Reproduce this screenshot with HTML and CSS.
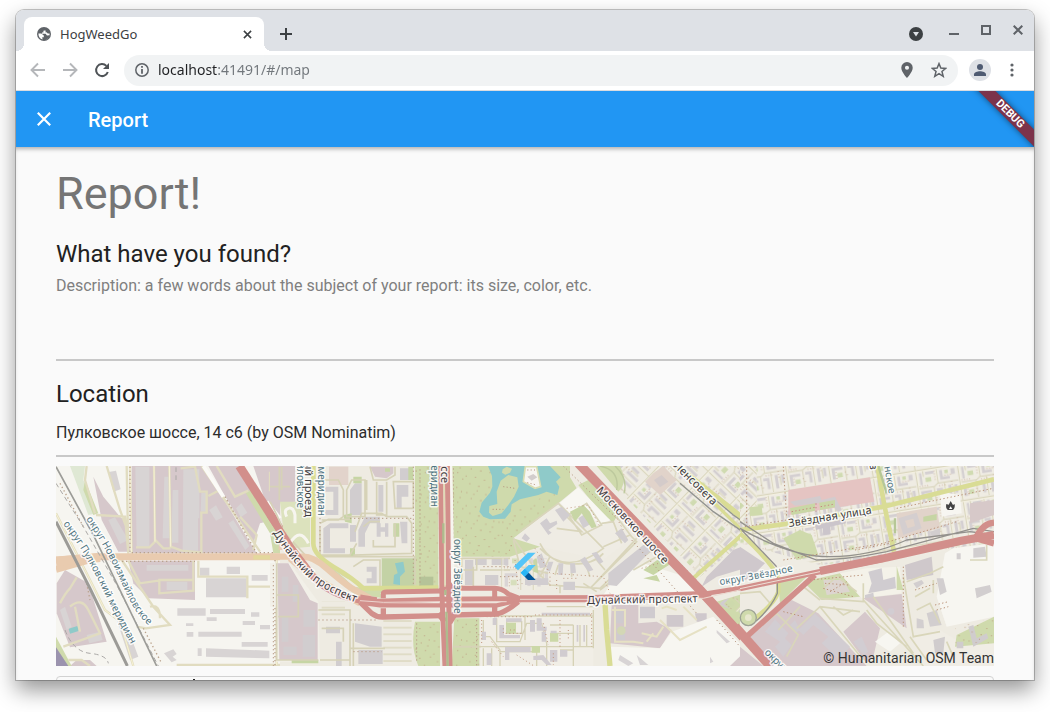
FILE: index.html
```html
<!DOCTYPE html>
<html lang="en">
<head>
<meta charset="utf-8">
<meta name="viewport" content="width=device-width, initial-scale=1">
<title>HogWeedGo</title>
<link rel="stylesheet" href="styles.css">
</head>
<body>
<div class="window">
  <header class="tabstrip">
    <div class="tab">
      <svg class="favicon" viewBox="0 0 14 14" aria-hidden="true"><circle cx="7" cy="7" r="7" fill="#5f6368"/><path d="M1.400 6.600H4.400L6.800 8.400V10.200H5.200L5.600 12.500C3 12 1.400 9.800 1.400 6.600ZM8.600 1.600V3.200L6.400 3.800V5.600H5V6.800H8.600L10 8.600 12.400 8.200C12 10.600 10.500 12.200 8.400 12.600 11.600 12 12.700 9.300 12.600 6.600H10.800L9.600 5.200 8.600 5.400" fill="#fff"/></svg>
      <span class="tab-title">HogWeedGo</span>
      <button class="icon-button tab-close" aria-label="Close tab"><svg viewBox="0 0 10 10"><path d="M1 1 9 9M9 1 1 9" fill="none" stroke="#3c4043" stroke-width="1.700"/></svg></button>
    </div>
    <button class="icon-button new-tab" aria-label="New tab"><svg viewBox="0 0 12 12"><path d="M6 0V12M0 6H12" stroke="#3c4043" stroke-width="2"/></svg></button>
    <div class="window-controls">
      <button class="icon-button search-tabs" aria-label="Search tabs"><svg viewBox="0 0 14 14"><circle cx="7" cy="7" r="7" fill="#3c4043"/><path d="M4 5H10L7 9.500Z" fill="#dee1e6"/></svg></button>
      <button class="icon-button" aria-label="Minimize"><svg viewBox="0 0 10 10"><path d="M0 9H10" stroke="#5f6368" stroke-width="2"/></svg></button>
      <button class="icon-button" aria-label="Maximize"><svg viewBox="0 0 10 10"><path d="M1 1H9V9H1Z" fill="none" stroke="#5f6368" stroke-width="2"/></svg></button>
      <button class="icon-button" aria-label="Close window"><svg viewBox="0 0 10 10"><path d="M.7.7 9.300 9.300M9.300.7.7 9.300" stroke="#5f6368" stroke-width="2"/></svg></button>
    </div>
  </header>
  <nav class="toolbar" aria-label="Browser toolbar">
    <button class="icon-button nav-button" aria-label="Back" disabled><svg viewBox="0 0 16 16"><path d="M15 8H2M8 1.500 1.500 8 8 14.500" fill="none" stroke="#b5b7ba" stroke-width="1.900"/></svg></button>
    <button class="icon-button nav-button" aria-label="Forward" disabled><svg viewBox="0 0 16 16"><path d="M1 8H14M8 1.500 14.500 8 8 14.500" fill="none" stroke="#b5b7ba" stroke-width="1.900"/></svg></button>
    <button class="icon-button nav-button" aria-label="Reload"><svg viewBox="0 0 16 16"><path d="M13.800 10A6 6 0 1 1 12.400 3.900" fill="none" stroke="#4f5357" stroke-width="2"/><path d="M15 1V7H9Z" fill="#4f5357"/></svg></button>
    <div class="omnibox">
      <svg class="omni-icon" viewBox="0 0 14 14" aria-hidden="true"><circle cx="7" cy="7" r="6.200" fill="none" stroke="#5f6368" stroke-width="1.500"/><path d="M7 6V10.800M7 3V4.800" stroke="#5f6368" stroke-width="1.800"/></svg>
      <input class="url" type="text" aria-label="Address" value="localhost:41491/#/map">
      <button class="icon-button" aria-label="Location access"><svg viewBox="0 0 14 14"><path fill-rule="evenodd" d="M7 0A5 5 0 0 0 2 5C2 8.700 7 14 7 14S12 8.700 12 5A5 5 0 0 0 7 0ZM7 3.200A1.800 1.800 0 1 1 7 6.800 1.800 1.800 0 0 1 7 3.200Z" fill="#5f6368"/></svg></button>
      <button class="icon-button" aria-label="Bookmark"><svg viewBox="0 0 14 14"><path d="M7 1.400 8.600 5.300 12.900 5.600 9.600 8.300 10.700 12.500 7 10.200 3.300 12.500 4.400 8.300 1.100 5.600 5.400 5.300Z" fill="none" stroke="#5f6368" stroke-width="1.300"/></svg></button>
    </div>
    <button class="icon-button avatar" aria-label="Profile"><svg viewBox="0 0 22 22"><circle cx="11" cy="11" r="11" fill="#dee1e6"/><circle cx="11" cy="8" r="3" fill="#4f5b72"/><path d="M5 17V15.500C5 13.300 8.500 12.200 11 12.200S17 13.300 17 15.500V17Z" fill="#4f5b72"/></svg></button>
    <button class="icon-button menu" aria-label="Menu"><svg viewBox="0 0 4 14"><circle cx="2" cy="2" r="1.600" fill="#5f6368"/><circle cx="2" cy="7" r="1.600" fill="#5f6368"/><circle cx="2" cy="12" r="1.600" fill="#5f6368"/></svg></button>
  </nav>
  <div class="viewport">
    <div class="appbar">
      <button class="icon-button back" aria-label="Close"><svg viewBox="0 0 14 14"><path d="M.8.800 13.200 13.200M13.200.800.800 13.200" stroke="#fff" stroke-width="2.200"/></svg></button>
      <span class="appbar-title">Report</span>
      <span class="debug">DEBUG</span>
    </div>
    <main class="content">
      <h1>Report!</h1>
      <h2><label for="description">What have you found?</label></h2>
      <textarea id="description" class="description" placeholder="Description: a few words about the subject of your report: its size, color, etc."></textarea>
      <h2 class="location-title"><label for="location">Location</label></h2>
      <input id="location" class="location" type="text" value="Пулковское шоссе, 14 с6 (by OSM Nominatim)">
      <div class="map">
        <svg class="map-canvas" viewBox="0 0 938 200" preserveAspectRatio="xMidYMid slice" role="img" aria-label="Map">
          <defs>
            <pattern id="trees" width="97" height="89" patternUnits="userSpaceOnUse"><path d="M7 9h3M38 4h3M64 15h3M88 6h3M20 27h3M49 33h3M77 38h3M5 48h3M33 52h3M92 57h3M60 61h3M16 71h3M43 79h3M74 82h3M84 24h3M28 14h3" stroke="#bd9c80" stroke-width="3"/></pattern>
            <g id="estate"><path d="M0 5H150M5 0V130M78 5V60H150M5 70H62V130M100 60V130M62 70 78 60M30 5V30M130 78V110" fill="none" stroke="#d8d4ba" stroke-width="4"/><path d="M0 9H150M9 9V130M74 9V56M104 64V130" fill="none" stroke="#f3f0e0" stroke-width="3"/><path d="M16 16H24V58H16ZM38 14H68V24H38ZM88 16H98V50H88ZM98 40H122V50H98ZM128 16H142V36H128ZM14 80H24V120H14ZM24 80H52V90H24ZM70 78H92V88H70ZM82 88H92V118H82ZM112 72H122V120H112ZM134 74H144V104H134Z" fill="#d1cccf"/><path d="M36 34H56V50H36ZM106 18H118V30H106ZM32 100H50V116H32Z" fill="#cdd9ac"/><path d="M12 63h3m6 0h3m6 0h3m6 0h3M70 14v3m0 7v3m0 7v3m0 7v3M80 70h3m7 0h3m7 0h3M28 96v3m0 7v3m0 7v3M126 60v3m0 7v3m0 7v3M104 36h3m7 0h3m7 0h3M60 98v3m6 8v3" stroke="#bd9883" stroke-width="3"/></g>
            <pattern id="blocks" width="150" height="130" patternUnits="userSpaceOnUse"><use href="#estate"/></pattern>
            <pattern id="blocks-diagonal" width="150" height="130" patternUnits="userSpaceOnUse" patternTransform="rotate(-46) scale(.9)"><use href="#estate"/></pattern>
            <pattern id="blocks-tilted" width="150" height="130" patternUnits="userSpaceOnUse" patternTransform="rotate(-9) scale(.85)"><use href="#estate"/></pattern>
            <pattern id="lots" width="26" height="20" patternUnits="userSpaceOnUse"><path d="M0 3H26" stroke="#dad6bb" stroke-width="4"/></pattern>
            <path id="l1" d="M30 53Q52 85 66 118T94 160"/>
            <path id="l2" d="M7 58Q28 84 47 124T81 188"/>
            <path id="l3" d="M217 67Q230 88 248 107T308 139"/>
            <path id="l4" d="M531 138L655 136"/>
            <path id="l5" d="M540 25L616 107"/>
            <path id="l6" d="M611-6L675 58"/>
            <path id="l7" d="M733 61L826 46"/>
            <path id="l8" d="M664 119Q700 114 748 103"/>
          </defs>
          <rect width="938" height="200" fill="#eeebe2"/>
          <g transform="scale(.33333)">
            <!-- west: industrial blocks and railways -->
            <g transform="translate(-48 -18)">
              <path d="M48 18H720V618H48Z" fill="#f6f5f0"/>
              <path d="M90 18H135L130 60 170 160 145 165Z" fill="#dfe8d4"/><path d="M135 60 175 160 160 165 130 90Z" fill="#cfdaac"/>
              <path d="M160 50 190 110 240 170 265 190 270 275H235L185 180Z" fill="#d6c8cb"/>
              <path d="M275 18H490L650 280H275Z" fill="#d6c8cb"/><path d="M505 18H600L700 180 660 190 640 250 550 100Z" fill="#d6c8cb"/>
              <path d="M640 18H720V190L685 150Z" fill="#d6c8cb"/><path d="M265 302H465V420L325 415 280 370Z" fill="#d6c8cb"/>
              <path d="M75 330 145 370 200 545 90 562 50 460V370Z" fill="#d6c8cb"/><path d="M110 600H150L170 618H90Z" fill="#d6c8cb"/>
              <path d="M615 95 635 90 720 220V280H700L690 220Z" fill="#cfdaac"/><path d="M48 530 95 618H80L48 565Z" fill="#cfdaac"/>
              <path d="M48 562 85 618H48Z" fill="#9b93ae"/><path d="M86 506 112 498 116 513 90 521Z" fill="#8fcac9"/>
              <g fill="#d8d4d4"><path d="M286 20H328V262H290ZM373 50H390V235H368ZM398 90H415V248H394ZM430 28H478V175H474V272H428ZM484 98H500V155H482ZM206 36 228 32 242 88 220 95ZM205 180 225 172 265 240 240 252ZM508 150 528 136 548 172 528 182ZM588 145 604 130 622 158 602 172ZM565 190 580 180 628 258 616 270ZM320 315H445V332H320ZM380 365H442V390H380ZM498 355H620V412H498ZM412 445H497V467H412ZM510 447H615V462H510ZM475 515H605V530H475ZM605 546H683V560H605ZM498 565 688 572V595L498 590ZM473 565H485V588H473ZM440 516H460V530H440ZM633 457H658V470H633ZM608 483H645V495H608ZM660 495H690V508H660ZM480 323H508V347H480ZM372 580 400 568 410 582 398 590 410 600 395 607ZM225 465 245 455 295 590 270 600ZM60 450 75 440 95 500 80 510ZM140 525 180 515 188 540 148 550ZM635 345H683V362H635ZM560 320H600V342H560ZM438 490H460V498H438ZM500 472H530V483H500Z"/></g>
              <g fill="none" stroke="#e1dcc0" stroke-width="7"><path d="M270 18 275 285M342 18 345 245M388 18 392 260 425 272 488 278M422 25 465 20 480 95H500V158H484V275M288 262H328L348 242 370 265H392M168 165 255 170 265 280M140 18 135 60 165 160M505 108 535 92M530 18 585 110 625 92M485 18 660 275M475 302V350H622V415M460 302V392L358 400V360H460M265 302 300 370 355 362M625 380H700M710 300V615M48 160 140 340 195 450 240 485 280 618M235 285 340 440 390 495 318 505 290 500M330 440Q360 430 360 475M60 430Q75 400 90 385L110 352M90 440Q125 410 145 450L180 520 70 560M105 440 120 515M260 18 265 285M200 18 240 150 262 210M410 615H720M85 600 125 600 150 618M690 35V90H720M600 170 650 225 640 270"/></g>
              <g stroke="#f7f2d4" fill="none" stroke-width="3"><path d="M342 18 345 245M388 18 392 260M270 18 275 285M710 300V615M48 160 140 340 195 450 240 485 280 618"/></g>
              <path d="M490 18 550 110M680 125 720 175" stroke="#fbfaf7" stroke-width="11"/>
              <path d="M48 300 180 290 720 290M48 328 140 302" fill="none" stroke="#e9cbaf" stroke-width="21"/>
              <path d="M48 304 180 292" stroke="#e9cbaf" stroke-width="28"/><path d="M640 292H720" stroke="#e3d89d" stroke-width="13"/>
              <path d="M210 304H465M275 278H700M705 300V618M270 20V275M555 110 650 280M310 505 365 610M60 70 130 200M140 370 150 420" fill="none" stroke="#baa28c" stroke-width="4" stroke-dasharray="4 8"/>
              <path d="M48 70 130 200 230 375 355 618M75 510Q100 575 150 580T205 610M408 22V60" fill="none" stroke="#aaa8a6" stroke-width="3" stroke-dasharray="14 10"/>
              <path d="M48 20 160 225 350 618" fill="none" stroke="#9c9c98" stroke-width="5"/><path d="M48 185 150 385 262 618" fill="none" stroke="#9c9b97" stroke-width="9"/>
              <path d="M598 18 720 208" stroke="#d28f8b" stroke-width="26"/>
            </g>
            <!-- centre: housing and parks -->
            <g transform="translate(642 -18)">
              <path d="M135 18H435V385H280L140 280Z" fill="#eeebe2"/><path d="M0 18H75V125L30 130 0 110Z" fill="#d6c8cb"/>
              <path d="M30 125H120V260L70 265 40 210Z" fill="#dce2bd"/><path d="M145 295Q200 330 250 380L340 390V415L250 400Z" fill="#cfdaac"/>
              <path d="M0 310H60L145 425 150 605H20V440H0Z" fill="#f2f0e8"/><path d="M22 310H55L120 420 143 430V600H28Z" fill="#d6c8cb"/>
              <path d="M435 18H505V385H435ZM435 485H510V618H445Q420 560 435 485ZM553 475H628V618H545Z" fill="#cfdaac"/>
              <path d="M545 18H900V230L720 290H545Z" fill="#cfdaac"/><path d="M435 18H505V385H435ZM435 490H510V618H435ZM545 18H735V290H545ZM555 480H628V618H555Z" fill="url(#trees)"/>
              <path d="M335 295H435V380H335Z" fill="#c3d2a5"/><path d="M375 310 400 305 405 335 390 350V375L370 372 372 345 383 340Z" fill="#8fcac9"/>
              <path d="M177 20H235V75H177Z" fill="#e2d3cb"/><path d="M300 20H370V40L350 55 315 50Z" fill="#d6c8cb"/>
              <path d="M165 80H205V165H165V150H190V95H165ZM240 90 255 70H275V165H240ZM160 205 180 190H235V205H180V265H225V280H160ZM265 210 285 170H330V190H300L285 220V260H265ZM240 195H258V245H240ZM320 190H332V202H345V190H355V230H345V215H332V230H320ZM390 185H412V250H395ZM380 75H415V110H395V145H380ZM390 25H420V60H390ZM290 320H320V370H290V355H305V335H290ZM325 75H340V155H325ZM35 350H55V395H35ZM68 375H85V425H68ZM35 470H55V545H35ZM100 450H135V500H100ZM40 560H80V585H40ZM98 525H135V590H98ZM255 490 335 500V560H300L255 545ZM265 570H338V612H265ZM585 300H610V375H585ZM615 295H650V315H615ZM665 295H715V315H665ZM645 345H685V375H645ZM198 545H215V618H198ZM168 500H210V520H168Z" fill="#d1cdcf"/>
              <path d="M220 165 245 160V190L225 185ZM250 50H275V70H250ZM345 25H360V35H345ZM370 190H388V230H370ZM65 600H145V610H65ZM415 20H430V60H415ZM240 265H255V290H240Z" fill="#c6d5a4"/>
              <path d="M448 350H490V378H448Z" fill="#b5c398"/>
              <g fill="none" stroke="#d6d2b7" stroke-width="5"><path d="M155 60H205L220 90V170L205 180H155M230 90 245 60H285V170H230ZM150 190 175 178H240M150 200V285H240L260 250M255 215 275 160H335L350 170H410L425 190V280L250 285M300 20 310 60H350L375 45V20M370 65H430V145H375ZM290 60V150M320 65V165H350V65M280 200 300 185H330M310 240V260H375V190M160 20V55M140 290H435V385M250 320 280 300H330V380H270M160 300Q215 350 250 360M0 80H60M28 20V120M0 125Q30 180 40 215L110 290M20 405H85V470H25M20 310V600H145M35 20V90M145 450H240V618M155 505H220V545M150 600H240M250 490V618M240 565H345M545 330H620V295M575 380V295M630 330H720M610 320V380M550 560H720M560 295H720"/></g>
              <path d="M340 470H425V618H340ZM155 425H225V470H155Z" fill="url(#lots)"/><path d="M145 480H325M150 30V280M240 175H430M430 20V380M450 380V20M440 490V610M550 25V290M620 480V618M10 315V618M640 320H720M250 575H335" stroke="#b99c87" stroke-width="3" stroke-dasharray="4 8" fill="none"/>
              <path d="M50 170Q40 150 55 145T75 165V190M60 250Q90 200 115 250" fill="none" stroke="#f7f5ef" stroke-width="9"/>
              <path d="M130 18V250Q130 285 190 320T280 385L505 383" fill="none" stroke="#d9dc95" stroke-width="14"/>
              <path d="M0 290H100Q130 290 170 325T245 385L300 415M40 215 35 270M60 295Q100 330 130 350T270 430" fill="none" stroke="#e9cbaf" stroke-width="19"/>
              <path d="M0 165 65 265 130 350Q180 405 270 420" fill="none" stroke="#d28f8b" stroke-width="21"/>
              <path d="M541 18 548 380" stroke="#f7f5f0" stroke-width="12"/>
            </g>
            <!-- east of the interchange -->
            <g transform="translate(1332 -18)">
              <path d="M0 18H190L0 290Z" fill="#cfdaac"/>
              <path d="M190 18 230 85 350 170 290 270 40 235 0 290V60Z" fill="#cfdaac"/><path d="M0 175 200 75 100 180 0 280Z" fill="url(#trees)"/>
              <path d="M175 130 235 80 330 180 390 240 310 300 120 260 40 235Z" fill="#efece4"/><path d="M235 75 265 60 350 155 320 180Z" fill="#cfdaac"/><path d="M180 128 235 82 330 180 300 200 255 140 215 165Z" fill="#f8f7f2"/>
              <path d="M280 18H750V230L580 350 490 300Z" fill="#eeebe2"/><path d="M290 18H750V230L600 350Z" fill="url(#blocks-diagonal)" opacity=".9"/><path d="M290 18H360Q385 70 355 95Z" fill="#cfdaac"/><path d="M300 18Q360 30 350 90M345 18Q385 55 372 100" fill="none" stroke="#bdc99d" stroke-width="4"/>
              <path d="M435 65 460 40 490 18 530 60 480 105Z" fill="#e1d3ca"/><path d="M462 60 485 45 505 65 480 82Z" fill="#d4cbca"/>
              <path d="M340 360 430 310 570 355 600 400 310 405Z" fill="#f7f6f1"/><path d="M0 435H290V618H0Z" fill="#eeebe2"/>
              <path d="M0 295H145V390H0Z" fill="url(#blocks)" opacity=".7"/>
              <g fill="none" stroke="#d9d5bb" stroke-width="5"><path d="M40 235 115 340 150 375 300 385 450 240M120 265Q200 350 310 265L175 130 60 215M205 165 260 130 305 195 245 225ZM170 205 245 215 180 150M310 260 390 225 410 245 270 385M350 170 395 230M305 190 340 185 365 250M470 290 400 330M180 400V375M150 290 120 350M175 315 165 345M215 320V350M260 320 270 350M290 300 315 330M40 240 60 320 145 340M120 250Q150 310 215 312T310 280M280 375 410 235M300 390 470 260M250 370 290 395"/></g>
              <path d="M165 150 185 140 210 165 190 185ZM235 175 258 160 275 190 250 205ZM120 190 140 175 150 190 170 182 172 192 145 210 155 218 145 225ZM75 220 90 235 80 245 65 235ZM325 340 430 255 455 270 350 378 325 375ZM110 290 125 280 140 320 120 325ZM145 305 160 305 150 335 138 330ZM175 310 190 310 188 345 175 345ZM210 310 225 310 228 338 212 340ZM240 300 255 290 280 330 265 335ZM275 280 290 275 310 305 298 312ZM190 365H225V390H190ZM345 220 365 205 385 240 375 250ZM75 355H145V375H75Z" fill="#d1cdd0"/>
              <path d="M210 155 250 135 270 155 290 200 275 205 245 160 225 185ZM430 330 485 290 515 310 460 345ZM100 300 110 295 115 340 100 335ZM430 355 470 345 480 365Z" fill="#c8d6a5"/>
              <path d="M200 145 265 135 300 200M105 265 150 340 310 350 330 400M345 165 370 210M45 300 55 385M150 350V385M190 355H230M170 360V395M425 325 510 300" fill="none" stroke="#c19a82" stroke-width="3" stroke-dasharray="3 9"/>
              <path d="M335 435H415V490L470 485 515 510 480 565 330 550Z" fill="#d6c8cb"/><path d="M500 465H550V500H500ZM585 460H620V485H590Z" fill="#cfc8cc"/>
              <path d="M515 515 640 470 750 580V618H330V560L480 565Z" fill="#f7f6f1"/><path d="M360 585 400 610 385 618 355 600ZM410 585 445 615H420ZM650 510 690 545 680 550 650 518ZM630 590 640 605 630 610Z" fill="#d8d4d5"/><path d="M420 440H465V475H420ZM345 450H370V490H345ZM350 500H375V540H350Z" fill="#cfcbcf"/>
              <path d="M345 440V545H400L430 550M375 500V450H335M425 520 470 530 490 500M440 545 460 520M480 480 540 540 620 500M485 445 500 440 530 450M550 440 590 480" fill="none" stroke="#e6e1c4" stroke-width="6"/><circle cx="364" cy="512" r="13" fill="#d3d7b5"/>
              <path d="M620 350 700 270 750 250V320L650 350 605 380Z" fill="#cfc8cc"/><path d="M725 225 580 355" stroke="#d9dc95" stroke-width="12"/><path d="M750 560 690 618H750Z" fill="#d6c8cb"/>
              <path d="M635 430 750 395V530Z" fill="#cfdaac"/><path d="M645 430 700 410 750 430V470Z" fill="url(#blocks-diagonal)"/>
              <path d="M530 18 700 185 750 235M535 18 710 155 750 190M650 110 720 175 750 225" fill="none" stroke="#d9dc95" stroke-width="10"/><path d="M530 20 700 165 750 200M540 70 640 155 750 230" fill="none" stroke="#929490" stroke-width="4"/>
              <path d="M315 430 320 510 330 618" fill="none" stroke="#d9dc95" stroke-width="16"/>
              <path d="M395 240 590 460M245 20 590 360M190 18 350 175M0 350H60M650 480 720 560" fill="none" stroke="#b99c87" stroke-width="3" stroke-dasharray="4 8"/>
              <g fill="none" stroke="#d28f8b"><path d="M260 416 610 403" stroke-width="20"/><path d="M235 10 600 390 760 565" stroke-width="28"/><path d="M610 402 750 380" stroke-width="14"/></g><path d="M400 415H610L750 383" fill="none" stroke="#ecd9d0" stroke-width="3"/>
            </g>
            <!-- lake with its islands -->
            <g transform="translate(1152 -18)">
              <path d="M144 18 156 48 157 80 150 98 125 128 118 155 130 170 150 178 195 176 212 155 215 133 240 118 295 105 320 95 352 105 358 80 348 65 362 52 330 18Z" fill="#8fcac9"/>
              <path d="M205 45 232 52 236 80 222 110 205 135 185 160 158 168 147 158 148 138 172 132 170 95 182 62Z" fill="#cfdaac"/><path d="M188 28 200 20 216 26 210 38 196 44 186 38Z" fill="#cfdaac"/>
              <path d="M256 20H290L302 80 285 85 250 65Z" fill="#f7f6f1" stroke="#d9ddb2" stroke-width="5"/><path d="M262 50 280 42 292 52 275 62Z" fill="#d2cdcc"/><path d="M262 30H285M262 68 290 75M158 148H190M190 80 225 85" fill="none" stroke="#b38e79" stroke-width="3" stroke-dasharray="3 7"/>
            </g>
            <!-- interchange and the housing south of it -->
            <g transform="translate(912 312)">
              <path d="M362 135H440L475 100H700V290H362Z" fill="#f1eee6"/><path d="M60 70H240V80H70ZM60 112H235V130H60ZM310 55H400V75H310ZM310 110H400V125H310Z" fill="#eeebe3"/>
              <g fill="none" stroke="#d6d2b6" stroke-width="4"><path d="M385 138H700V230H640V290M410 145V215H480L500 160H545L560 220V290M370 150V200H390L420 240V290M440 155H485V190H440ZM530 290V245H420M640 165V230M660 165V230M680 165V230M700 120V235M290 230H700M570 165H640M570 190H640M600 240H640V290M495 135V210M560 110H700M370 235V290M395 235V290"/></g>
              <path d="M398 145 410 142V165H398ZM418 165H432V195H480V205H418ZM438 145H485V155H438ZM530 145H545V170H560V182H530ZM545 185H558V215H545ZM572 182H590V192H572ZM435 230H512V247H448V270H435ZM570 240H592V275H570ZM520 258 550 255 575 285H560L545 270H520ZM380 250H395V285H380ZM365 185H378V210H365ZM510 150H525V185H510ZM600 240H622V260H600ZM545 128H690V136H545ZM650 165H655V215H650ZM670 165H675V215H670Z" fill="#d1ccd0"/>
              <path d="M438 158H468V190H438ZM570 190H595V215H570ZM515 228H540V248H515Z" fill="#cbd8a7"/>
              <path d="M380 140H520M365 150V225M430 175V190H490M525 135H700M550 160 565 225M600 150V230M395 215 430 260M580 250V285M450 180H470M625 180V210M695 130V230M470 255 525 290" fill="none" stroke="#c0957b" stroke-width="3" stroke-dasharray="3 8"/>
              <g fill="none" stroke="#d28f8b" stroke-linejoin="round"><path d="M0 95 245 88 700 84" stroke-width="15"/><path d="M0 84 50 92M480 86H700" stroke-width="21"/><path d="M0 98 60 106H410L490 88" stroke-width="13"/><path d="M70 85V70Q70 66 80 66L240 63M270 55H405Q425 55 445 72L480 86M404 55V85" stroke-width="15"/><path d="M0 96 35 130Q50 142 70 141L245 137M275 135 410 132Q435 128 475 95M404 108V130M70 115V140" stroke-width="16"/><path d="M235 130 255 155M285 130 268 158M240 70 255 45M282 65 265 40" stroke-width="18"/><path d="M242-320 246 80 255 290" stroke-width="15"/><path d="M262-320 266 80 270 290" stroke-width="15"/></g>
              <path d="M252-320 255 50M260 130 263 290" fill="none" stroke="#e1d9b6" stroke-width="5"/><path d="M256 60V75M259 125 263 290M250-140V-80" stroke="#aebb8e" stroke-width="7"/>
              <path d="M0 92 70 97 240 95M285 97 440 95M480 88H690" fill="none" stroke="#ecd5cf" stroke-width="3"/>
            </g>
            <!-- east: shops, railway curve and industrial yards -->
            <g transform="translate(2052 -18)">
              <path d="M0 18H762V250L0 380Z" fill="#efece3"/><path d="M0 18H762V250L240 315 0 250Z" fill="url(#blocks-tilted)" opacity=".9"/><path d="M0 18H50V140L0 190Z" fill="#efece3"/><path d="M0 18H50V140L0 190Z" fill="url(#blocks-diagonal)"/><path d="M28 142 65 138 68 165 30 168Z" fill="#cfdaac"/>
              <path d="M145 90 390 52 403 125 145 165Z" fill="#e5c4c2"/><path d="M150 125 240 108 245 120 285 110 305 150 290 155 275 125 165 137Z" fill="#d2ccce"/><path d="M150 145 225 130V152L155 165ZM238 128 285 120V142L240 150Z" fill="#c9d7a5"/><path d="M155 155 225 142M242 140 285 132M228 130V155" stroke="#c5877e" stroke-width="3" stroke-dasharray="4 7"/>
              <path d="M130 235 180 210 215 225 235 285 170 300Z" fill="#cfdaac"/><path d="M470 160 590 140 600 205 475 235Z" fill="#e1d3ca"/><path d="M475 175 530 158 545 205 490 225Z" fill="#d4cecf"/><path d="M495 182 520 176 525 198 503 205Z" fill="#e1d3ca"/><path d="M550 170 590 162V180L550 185Z" fill="#c6d5a4"/><path d="M600 95 660 105 665 160 605 170Z" fill="#f7f6f1"/><path d="M690 130 762 120V165L690 190Z" fill="#d7c9c9"/><path d="M225 195 315 178 318 190 270 200 272 222 250 225 248 205 228 210Z" fill="#cbc5cb"/>
              <path d="M0 260 75 310 30 355 0 365Z" fill="#cfc8cc"/><path d="M0 390 225 345 762 245V618H0Z" fill="#eeebe2"/>
              <path d="M115 365 205 345 120 430Z" fill="#cfdaac"/><path d="M190 365 300 340 360 410 245 420Z" fill="#cfdaac"/><path d="M250 360 310 360 330 395 260 405Z" fill="#ddd5d0"/>
              <path d="M300 340 380 325 480 320 485 400 365 415Z" fill="#f4f2e9"/><path d="M385 335 425 325 430 360 465 350 468 385 385 400 395 370ZM375 405 400 398 403 418 375 415Z" fill="#d0ccd0"/>
              <path d="M495 315 575 290 580 345 500 360Z" fill="#cfc8cb"/><path d="M615 280 640 265 762 250V470L620 500 590 410Z" fill="#f7f6f1"/><path d="M700 265 735 260 740 290 700 293ZM705 385 750 375 755 395 710 415ZM590 355 610 355 620 395 600 405ZM560 460 590 450 605 495 570 500ZM530 475 550 480 552 505 530 505ZM650 280H662V298H650ZM520 370 545 360 552 370 530 385ZM570 215 600 205V230H575Z" fill="#d2cecf"/>
              <path d="M155 420 235 460 380 618H90L30 530Z" fill="#d6c8cb"/><path d="M370 415 485 402 500 505ZM310 515 375 455 420 505 400 590 380 610ZM0 560 70 618H0Z" fill="#d6c8cb"/>
              <path d="M75 515 105 478 145 520 135 535 155 555 130 590 105 560 120 545ZM175 510 225 460 330 560 300 600 245 550 265 530 220 495 190 525ZM340 545 365 530 385 575 370 585ZM150 495 165 480 180 510 165 520Z" fill="#d2cdd2"/><circle cx="453" cy="454" r="10" fill="#d2cdd2"/>
              <path d="M405 545 445 515 480 550 450 575Z" fill="#f7f6f1"/><path d="M520 530 600 510 650 540 762 550V618H550Z" fill="#f0ede5"/><path d="M650 525 762 470V550L645 560Z" fill="#cfdaac"/><path d="M650 545H670V565H650ZM685 500 700 495 710 535 740 520 745 535 700 560ZM580 540 615 530 610 580 585 580Z" fill="#d0cccd"/><path d="M645 500 762 475V550H645Z" fill="url(#trees)"/>
              <g fill="none" stroke="#d9d6ba" stroke-width="5"><path d="M60 500 110 460 175 525 140 590M170 505 240 440 370 600M115 510 180 440M240 415 370 425V370M240 440 360 455M370 420 550 618M400 410 520 580M380 450 410 490 500 560M250 385 290 350 350 395M490 350 520 530 600 515M500 365 570 340 610 320M525 410 570 385M530 450 570 430 600 490M580 360V400M510 530 560 600M690 300H740V255M0 400 60 395 90 430M190 380 240 420M280 440 310 465 340 450M620 545 640 590"/></g>
              <path d="M470 318 490 390 470 390Z" fill="#cfdaac"/><path d="M115 350V395Q105 430 45 475M0 220Q80 290 115 350" fill="none" stroke="#d9dc95" stroke-width="13"/><path d="M112 350V400Q90 450 40 490" fill="none" stroke="#8f918d" stroke-width="4"/>
              <circle cx="25" cy="473" r="24" fill="#cfdaac" stroke="#9da394" stroke-width="4"/><circle cx="25" cy="473" r="10" fill="#e7e7ce"/>
              <path d="M0 210 150 190 430 140 762 58M412 18 432 130 462 275" fill="none" stroke="#d9dc95" stroke-width="14"/><path d="M415 18 440 100M465 175V220" stroke="#b6c796" stroke-width="7"/>
              <path d="M0 185 100 250 230 300Q320 300 440 275L700 205 762 215M0 205Q150 290 270 290T500 240L690 215 762 225M5 210 110 320" fill="none" stroke="#93918d" stroke-width="4"/>
              <g fill="none" stroke="#d28f8b"><path d="M0 386 240 335 430 298" stroke-width="16"/><path d="M240 333 440 293 660 243 762 225" stroke-width="24"/><path d="M710 230Q730 190 762 188M710 235 762 250" stroke-width="19"/><path d="M225 345 20 530" stroke-width="17"/><path d="M-15 500 90 618" stroke-width="28"/></g><path d="M0 386 240 335" stroke="#eee0d7" stroke-width="3"/>
              <path d="M15 200 140 180M130 300 430 250 650 185M250 385 340 410M20 20V190M130 20 140 170M470 145 760 85M130 455 190 470M525 390 590 370M585 435 625 425M590 450 625 440M490 320V500M345 270 450 250M210 360 370 345M255 370 325 375M270 395 320 365" fill="none" stroke="#b99176" stroke-width="3" stroke-dasharray="4 7"/>
              <path d="M619 132Q616 145 624 150H638Q646 146 644 132L639 135 632 123 626 134Z" fill="#434343"/><path d="M632 139 637 147H627Z" fill="#fff"/>
            </g>
          </g>
          <g class="district">
            <text><textPath href="#l1">округ Новоизмайловское</textPath></text>
            <text><textPath href="#l2">округ Пулковский меридиан</textPath></text>
            <text transform="translate(241 42) rotate(90)" text-anchor="end">йловское</text>
            <text transform="translate(262 50) rotate(90)" text-anchor="end">меридиан</text>
            <text transform="translate(375 41) rotate(90)" text-anchor="end">еридиан</text>
            <text transform="translate(398 73) rotate(90)">округ Звёздное</text>
            <text><textPath href="#l8">округ Звёздное</textPath></text>
            <text transform="translate(833 28) rotate(80)" text-anchor="end">нское</text>
            <text transform="translate(708 187) rotate(45)">округ</text>
          </g>
          <g class="street">
            <text transform="translate(249 51) rotate(90)" text-anchor="end">ый проезд</text>
            <text transform="translate(385 17) rotate(90)" text-anchor="end">ссе</text>
            <text><textPath href="#l3">Дунайский проспект</textPath></text>
            <text><textPath href="#l4">Дунайский проспект</textPath></text>
            <text><textPath href="#l5">Московское шоссе</textPath></text>
            <text><textPath href="#l6">а Ленсовета</textPath></text>
            <text><textPath href="#l7">Звёздная улица</textPath></text>
            <text transform="translate(814 4) rotate(85)" text-anchor="end">в</text>
          </g>
          <g transform="translate(444 -6) scale(.33333)"><path d="M84 278H107L54 331 42 319Z" fill="#54c5f8"/><path d="M86 315H107L85 338 74 350 62 338Z" fill="#54c5f8"/><path d="M62 338 74 326 86 338 74 350Z" fill="#29b6f6"/><path d="M74 350 86 338 107 360H84Z" fill="#01579b"/></g>
        </svg>
        <span class="attribution">© Humanitarian OSM Team</span>
      </div>
      <div class="next-field"><span class="next-field-mark"></span></div>
    </main>
  </div>
</div>
</body>
</html>
```
FILE: styles.css
```css
* { box-sizing: border-box; }
body {
  margin: 0;
  height: 100vh;
  padding: 10px 16px 32px;
  background: #fff;
  font-family: Roboto, sans-serif;
  overflow: hidden;
}
.window {
  display: flex;
  flex-direction: column;
  height: 100%;
  border-radius: 8px 8px 0 0;
  overflow: hidden;
  background: #fafafa;
  box-shadow: 0 0 0 1px rgba(0, 0, 0, .22), 0 10px 22px rgba(0, 0, 0, .42);
}
.icon-button {
  display: flex;
  flex: none;
  padding: 0;
  border: 0;
  background: none;
}
.icon-button svg { display: block; width: 100%; }

.tabstrip {
  display: flex;
  flex: none;
  align-items: center;
  height: 41px;
  padding-left: 8px;
  background: #dee1e6;
}
.tab {
  position: relative;
  display: flex;
  align-items: center;
  align-self: flex-end;
  width: 240px;
  height: 34px;
  padding: 0 12px 0 13px;
  border-radius: 8px 8px 0 0;
  background: #fff;
}
.tab::before,
.tab::after {
  content: "";
  position: absolute;
  bottom: 0;
  width: 8px;
  height: 8px;
}
.tab::before { right: 100%; background: radial-gradient(circle at 0 0, transparent 8px, #fff 8px); }
.tab::after { left: 100%; background: radial-gradient(circle at 100% 0, transparent 8px, #fff 8px); }
.favicon { width: 14px; height: 14px; }
.tab-title {
  flex: 1;
  margin-left: 9px;
  color: #3c4043;
  font: 13px/18px "Noto Sans", sans-serif;
}
.tab-close { width: 9px; }
.new-tab { width: 12px; margin: 7px 0 0 16px; }
.window-controls {
  display: flex;
  gap: 22px;
  align-items: center;
  margin-left: auto;
  padding: 0 11px 2px 0;
}
.window-controls .icon-button { width: 10px; }
.window-controls .search-tabs { width: 14px; margin: 9px 4px 0 0; }

.toolbar {
  display: flex;
  flex: none;
  align-items: center;
  height: 40px;
  padding: 0 20px 1px 14px;
  border-bottom: 1px solid #dadce0;
  background: #fff;
}
.nav-button { width: 16px; margin-right: 16px; }
.omnibox {
  display: flex;
  flex: 1;
  gap: 16px;
  align-items: center;
  height: 31px;
  margin-right: 11px;
  margin-left: -2px;
  padding: 0 11px;
  border-radius: 16px;
  background: #f1f3f4;
}
.omnibox .icon-button { width: 16px; }
.omni-icon { width: 14px; height: 14px; margin-right: -7px; }
.url {
  flex: 1;
  min-width: 0;
  padding: 0;
  border: 0;
  color: transparent;
  background: linear-gradient(90deg, #202124 60px, #71767b 60px);
  background-clip: text;
  font: 14px/20px "Noto Sans", sans-serif;
}
.avatar { width: 22px; margin-right: 19px; }
.menu { width: 4px; }

.viewport { flex: 1; min-height: 0; overflow: hidden; }
.appbar {
  position: relative;
  display: flex;
  align-items: center;
  height: 56px;
  padding: 0 21px;
  overflow: hidden;
  color: #fff;
  background: #2196f3;
}
.back { width: 14px; }
.appbar-title {
  margin-left: 37px;
  padding-top: 2px;
  font-size: 20px;
  font-weight: 500;
  line-height: 24px;
}
.debug {
  position: absolute;
  top: 17px;
  right: -26px;
  width: 100px;
  height: 12px;
  background: #7c334b;
  box-shadow: 0 0 6px rgba(0, 0, 0, .5);
  font-size: 11px;
  font-weight: 700;
  line-height: 12px;
  text-align: center;
  transform: rotate(45deg);
}
.content {
  padding: 21px 40px 0;
  box-shadow: inset 0 4px 4px -2px rgba(0, 0, 0, .3);
  color: #212121;
}
h1 {
  margin: 0 0 20px;
  color: #757575;
  font-size: 45px;
  font-weight: 400;
  line-height: 52px;
}
h2 {
  margin: 0;
  font-size: 24px;
  font-weight: 400;
  line-height: 28px;
}
.description,
.location {
  display: block;
  width: 100%;
  border: 0;
  border-bottom: 2px solid #c8c8c8;
  border-radius: 0;
  outline: 0;
  color: #2c2c2c;
  background: none;
  font: 16px/20px Roboto, sans-serif;
}
.description {
  height: 93px;
  padding: 8px 0 0;
  resize: none;
}
.description::placeholder { color: #7f7f7f; opacity: 1; }
.location-title { margin-top: 19px; }
.location { height: 49px; padding: 14px 0 13px; }

.map { position: relative; height: 200px; margin: 9px 0 10px; }
.map-canvas { display: block; width: 100%; height: 100%; }
.attribution {
  position: absolute;
  right: 0;
  bottom: 0;
  color: #333;
  font-size: 14px;
  line-height: 16px;
}
.district,
.street {
  font-family: "Noto Sans", sans-serif;
  paint-order: stroke;
  stroke: rgba(255, 255, 255, .8);
  stroke-width: 3px;
  stroke-linejoin: round;
}
.district { fill: #4f7480; font-size: 10px; }
.street { fill: #3d3a3d; font-size: 11px; }
.next-field {
  height: 56px;
  padding-left: 136px;
  border: 1px solid #d2d2d2;
  border-radius: 4px;
}
.next-field-mark {
  display: block;
  width: 2px;
  height: 2px;
  margin-top: 2px;
  background: #212121;
}
```
